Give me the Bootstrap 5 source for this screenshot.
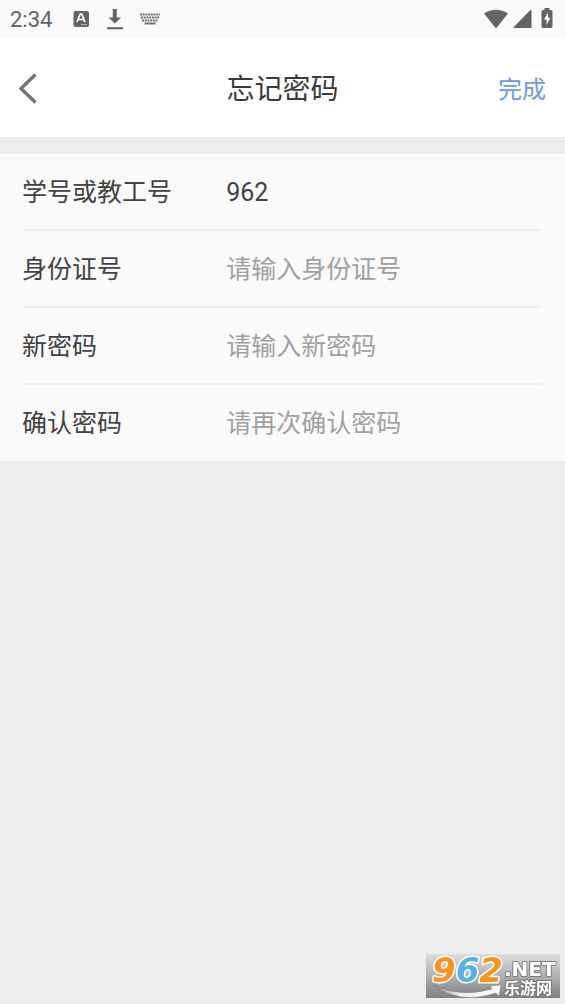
<!DOCTYPE html>
<html lang="zh-CN">
<head>
<meta charset="utf-8">
<meta name="viewport" content="width=device-width, initial-scale=1">
<title>忘记密码</title>
<link href="https://cdn.jsdelivr.net/npm/bootstrap@5.3.0/dist/css/bootstrap.min.css" rel="stylesheet">
<style>
body { background: #ededed; color: #424242; font-family: Roboto, "Noto Sans CJK SC", sans-serif; }
.statusbar { height: 38px; background: #fafafa; color: #636363; padding: 0 10px; }
.clock { font-size: 22px; line-height: 36px; padding-top: 2px; width: 62px; }
.titlebar { height: 99px; display: grid; grid-template-columns: 1fr auto 1fr; background: #fff; padding: 0 19px; }
.titlebar h1 { font-size: 28px; line-height: 40px; font-weight: 400; color: #3a3a3a; padding-top: 4px; }
.back { color: #757575; }
.titlebar .done { color: #6c9ae8; font-size: 24px; line-height: 36px; }
.done span { display: block; padding-top: 4px; }
.fields { background: #fafafa; padding: 0 23px; margin-top: 17px; }
.field { height: 77px; border-bottom: 2px solid #eee; }
.field:last-child { height: 76px; border-bottom: 0; }
.field label, .field input { font-size: 25px; line-height: 36px; padding: 2px 0 0; }
.field label { width: 204px; margin-left: -1px; margin-right: 1px; }
.field input { color: #424242; outline: 0; min-width: 0; }
.field input::placeholder { color: #a0a0a0; opacity: 1; }
.watermark { right: 5px; bottom: 6px; overflow: visible; }
</style>
</head>
<body class="min-vh-100">
<div class="statusbar d-flex align-items-center">
  <span class="clock">2:34</span>
  <div class="d-flex align-items-center">
    <svg width="18" height="18" viewBox="0 0 18 18" aria-hidden="true"><rect x="1.500" y="1" width="15.500" height="16" rx="2" fill="#636363"/><path d="M5 12 8.200 4h1.600L13 12M6.300 9.500h5.400" fill="none" stroke="#fff" stroke-width="1.700"/><path d="M9 14.700h6" stroke="#ddd" stroke-dasharray="1.500 .7"/></svg>
    <svg class="ms-3" width="18" height="22" viewBox="1 0 18 22" aria-hidden="true"><path d="M7.800 1h4v8.500h4.300L9.800 15.600 3.500 9.500h4.300zM2 19.200h16v2H2z" fill="#636363"/></svg>
    <svg class="ms-3" width="20" height="14" viewBox="0 0 20 14" aria-hidden="true"><path d="M0 2.500h20M1 5.500h18M2 8.500h16" stroke="#707070" stroke-width="2" stroke-dasharray="2 .7" fill="none"/><path d="M4.500 11.500h11" stroke="#707070" stroke-width="2"/></svg>
  </div>
  <div class="d-flex align-items-center ms-auto">
    <svg width="26" height="20" viewBox="0 0 26 20" aria-hidden="true"><path d="M1 4.500Q13-3 25 4.500L14 18.300q-1 1.200-2 0z" fill="#636363"/></svg>
    <svg class="ms-1" width="19" height="18" viewBox="1 0 17 17" aria-hidden="true"><path d="M18 0v17H1.500q-1-.2-.3-1L16.800.2Q17.900-.7 18 0z" fill="#636363"/></svg>
    <svg class="ms-2" width="15" height="22" viewBox="1 1 15 22" aria-hidden="true"><path d="M5.500 1h5v2H12q1.500 0 1.500 1.500v15Q13.500 21 12 21H4q-1.500 0-1.500-1.500v-15Q2.500 3 4 3h1.500z" fill="#636363"/><path d="M9 5.500 5 12.500h2.500V18l4-7.200H9z" fill="#fff"/></svg>
  </div>
</div>
<header class="titlebar align-items-center">
  <button type="button" class="back btn p-0 border-0 lh-1 text-start" aria-label="返回"><svg width="20" height="32" viewBox="1 0 20 32" aria-hidden="true"><path d="M17.500 2.500 3 16.500l14.500 14" fill="none" stroke="currentColor" stroke-width="3.500"/></svg></button>
  <h1 class="m-0">忘记密码</h1>
  <button type="submit" form="reset" class="done btn p-0 border-0 text-end"><span>完成</span></button>
</header>
<form id="reset" class="fields">
  <div class="field d-flex align-items-center"><label for="uid">学号或教工号</label><input id="uid" class="flex-fill border-0 bg-transparent" type="text" value="962"></div>
  <div class="field d-flex align-items-center"><label for="idcard">身份证号</label><input id="idcard" class="flex-fill border-0 bg-transparent" type="text" placeholder="请输入身份证号"></div>
  <div class="field d-flex align-items-center"><label for="pw">新密码</label><input id="pw" class="flex-fill border-0 bg-transparent" type="password" placeholder="请输入新密码"></div>
  <div class="field d-flex align-items-center"><label for="pw2">确认密码</label><input id="pw2" class="flex-fill border-0 bg-transparent" type="password" placeholder="请再次确认密码"></div>
</form>
<svg class="watermark position-fixed" width="134" height="44" viewBox="0 0 134 44" role="img" aria-label="962.NET 乐游网">
  <defs>
    <linearGradient id="plate" x2="0" y2="1"><stop stop-color="#dcdcdc"/><stop offset=".5" stop-color="#b0b0b0"/><stop offset="1" stop-color="#808080"/></linearGradient>
    <linearGradient id="swoosh"><stop stop-color="#888"/><stop offset=".4" stop-color="#eee"/><stop offset="1" stop-color="#fff"/></linearGradient>
  </defs>
  <rect width="134" height="44" fill="url(#plate)"/>
  <path d="M7 31Q35 44 66 35L64 32 75 31 73 42 70 39Q33 51 7 31z" fill="url(#swoosh)" stroke="#777" stroke-width=".5"/>
  <g font-family="DejaVu Sans" font-weight="bold" paint-order="stroke" stroke-linejoin="round">
    <text x="6" y="28" font-size="34" font-style="italic" stroke="#fff" stroke-width="3"><tspan fill="#f7941d">9</tspan><tspan fill="#58b0e3">6</tspan><tspan fill="#f7941d">2</tspan></text>
    <text x="78" y="22" font-size="20" fill="#fff" stroke="#808080" stroke-width="2">.NET</text>
  </g>
  <text x="78" y="40" font-family="Noto Sans CJK SC, sans-serif" font-weight="bold" font-size="16" fill="#fff" stroke="#777" stroke-width="2" paint-order="stroke">乐游网</text>
</svg>
<script src="https://cdn.jsdelivr.net/npm/bootstrap@5.3.0/dist/js/bootstrap.bundle.min.js"></script>
</body>
</html>
